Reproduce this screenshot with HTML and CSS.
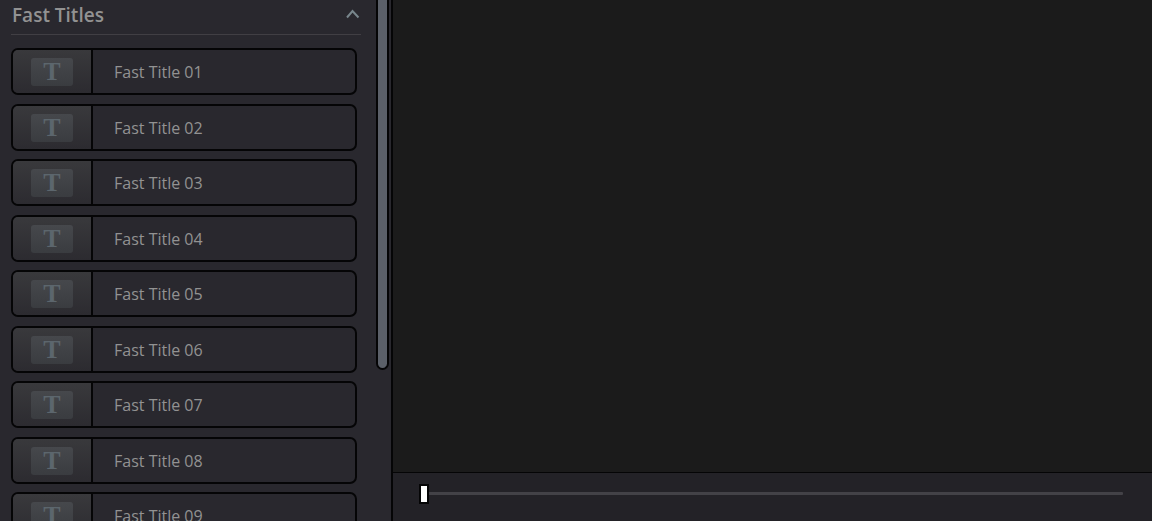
FILE: index.html
```html
<!DOCTYPE html>
<html lang="en">
<head>
<meta charset="utf-8">
<meta name="viewport" content="width=device-width, initial-scale=1">
<title>Fast Titles</title>
<link rel="stylesheet" href="styles.css">
</head>
<body>
<div class="app">
  <aside class="sidebar">
    <section class="panel">
      <button class="panel-header" type="button" aria-expanded="true">
        <span>Fast Titles</span>
        <svg class="chevron" width="16" height="12" viewBox="0 0 16 12" aria-hidden="true"><path d="M2 8.5 7.500 2l6 6.500" fill="none" stroke="currentColor" stroke-width="2"/></svg>
      </button>
      <div class="title-list">
        <button class="title-item" type="button"><span class="thumb"><span class="glyph">T</span></span><span class="name">Fast Title 01</span></button>
        <button class="title-item" type="button"><span class="thumb"><span class="glyph">T</span></span><span class="name">Fast Title 02</span></button>
        <button class="title-item" type="button"><span class="thumb"><span class="glyph">T</span></span><span class="name">Fast Title 03</span></button>
        <button class="title-item" type="button"><span class="thumb"><span class="glyph">T</span></span><span class="name">Fast Title 04</span></button>
        <button class="title-item" type="button"><span class="thumb"><span class="glyph">T</span></span><span class="name">Fast Title 05</span></button>
        <button class="title-item" type="button"><span class="thumb"><span class="glyph">T</span></span><span class="name">Fast Title 06</span></button>
        <button class="title-item" type="button"><span class="thumb"><span class="glyph">T</span></span><span class="name">Fast Title 07</span></button>
        <button class="title-item" type="button"><span class="thumb"><span class="glyph">T</span></span><span class="name">Fast Title 08</span></button>
        <button class="title-item" type="button"><span class="thumb"><span class="glyph">T</span></span><span class="name">Fast Title 09</span></button>
      </div>
    </section>
    <div class="scrollbar"><div class="scrollbar-thumb"></div></div>
  </aside>
  <main class="viewer">
    <div class="preview"></div>
    <div class="timeline">
      <input class="scrubber" type="range" min="0" max="100" value="0" aria-label="Playback position">
    </div>
  </main>
</div>
</body>
</html>
```
FILE: styles.css
```css
* {
  box-sizing: border-box;
}

body {
  margin: 0;
  background: #29282e;
  color: #929292;
  font-family: "Open Sans", "Noto Sans", sans-serif;
}

button {
  margin: 0;
  color: inherit;
  font: inherit;
  text-align: left;
  cursor: pointer;
}

.app {
  display: flex;
  height: 100vh;
  overflow: hidden;
}

.sidebar {
  display: flex;
  flex: 0 0 393px;
  border-right: 2px solid #050506;
  overflow: hidden;
}

.panel {
  flex: 1;
  padding: 0 15px 0 11px;
}

.panel-header {
  display: flex;
  align-items: center;
  justify-content: space-between;
  width: 100%;
  height: 35px;
  padding: 0 0 4px 1px;
  border: 0;
  border-bottom: 1px solid #413f44;
  background: none;
  font-size: 19px;
  font-weight: 600;
}

.chevron {
  color: #78868c;
}

.title-list {
  padding: 13px 4px 0 0;
}

.title-item {
  display: flex;
  width: 100%;
  height: 47px;
  margin-bottom: 8px;
  padding: 0;
  border: 2px solid #050506;
  border-radius: 7px;
  background: #29282e;
  overflow: hidden;
}

.title-item:nth-child(odd) {
  margin-bottom: 9px;
}

.thumb {
  display: flex;
  align-items: center;
  justify-content: center;
  flex: 0 0 80px;
  height: 100%;
  border-right: 2px solid #050506;
  background: linear-gradient(#39393c, #2c2b30);
}

.glyph {
  width: 42px;
  height: 28px;
  border-radius: 3px;
  background: linear-gradient(#46484c, #3a3c40);
  color: #5c666d;
  font: bold 26px/28px "Liberation Serif", serif;
  text-align: center;
}

.name {
  padding-left: 21px;
  font-size: 16px;
  line-height: 45px;
}

.scrollbar {
  flex: 0 0 15px;
  padding-right: 2px;
}

.scrollbar-thumb {
  height: 71%;
  border: 2px solid #050506;
  border-top: 0;
  border-radius: 0 0 7px 7px;
  background: #5b6069;
}

.viewer {
  display: flex;
  flex: 1;
  flex-direction: column;
  min-width: 0;
}

.preview {
  flex: 1;
  background: #1b1b1b;
}

.timeline {
  display: flex;
  flex: 0 0 49px;
  padding: 11px 29px 17px 26px;
  border-top: 1px solid #050506;
  background: #232227;
}

.scrubber {
  flex: 1;
  min-width: 0;
  height: 19px;
  margin: 0;
  background: none;
  appearance: none;
}

.scrubber::-webkit-slider-runnable-track {
  height: 3px;
  border-radius: 1px;
  background: #434247;
}

.scrubber::-webkit-slider-thumb {
  width: 10px;
  height: 20px;
  margin-top: -8px;
  border: 2px solid #050506;
  background: #fff;
  appearance: none;
}
```
